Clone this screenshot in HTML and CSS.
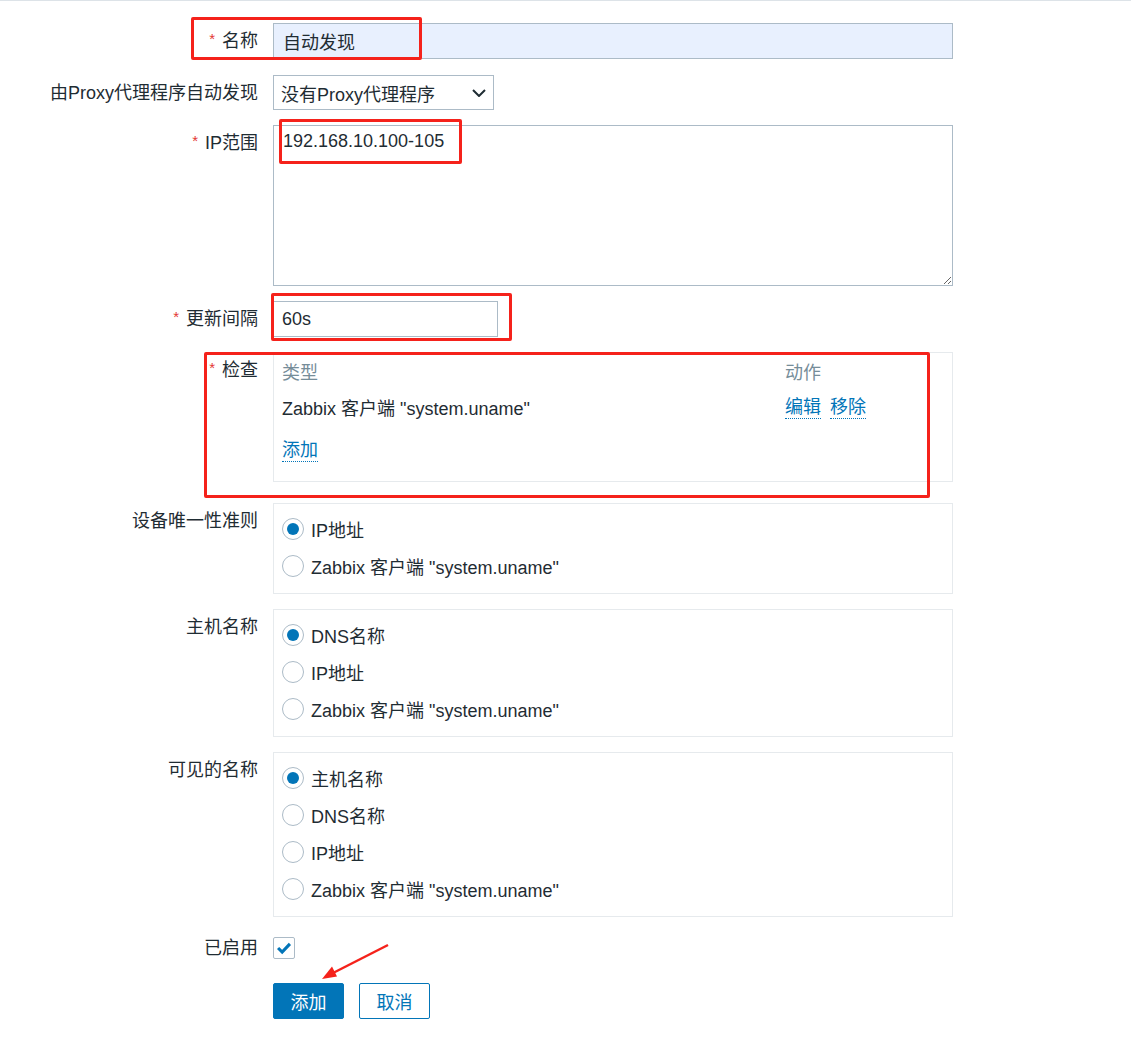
FILE: index.html
```html
<!DOCTYPE html>
<html lang="zh-CN">
<head>
    <meta charset="UTF-8" />
    <meta name="viewport" content="width=device-width, initial-scale=1.0" />
    <title>自动发现</title>
    <link rel="stylesheet" href="styles.css">
</head>
<body>
    <div class="page">
        <form class="form">
            <div class="row row-first">
                <label class="label required">名称</label>
                <input class="input input-name" type="text" value="自动发现" />
            </div>

            <div class="row row-select">
                <label class="label">由Proxy代理程序自动发现</label>
                <div class="select">
                    <span>没有Proxy代理程序</span>
                    <svg class="chevron" viewBox="0 0 14 8"><path d="M1 1 L7 7 L13 1" /></svg>
                </div>
            </div>

            <div class="row">
                <label class="label required">IP范围</label>
                <textarea class="input textarea">192.168.10.100-105</textarea>
            </div>

            <div class="row">
                <label class="label required">更新间隔</label>
                <input class="input input-delay" type="text" value="60s" />
            </div>

            <div class="row row-checks">
                <label class="label required">检查</label>
                <div class="checks">
                    <div class="checks-line checks-head">
                        <span class="col-type">类型</span>
                        <span>动作</span>
                    </div>
                    <div class="checks-line">
                        <span class="col-type">Zabbix 客户端 "system.uname"</span>
                        <span class="actions">
                            <a class="link">编辑</a>
                            <a class="link">移除</a>
                        </span>
                    </div>
                    <div class="checks-line checks-add">
                        <a class="link">添加</a>
                    </div>
                </div>
            </div>

            <div class="row">
                <label class="label">设备唯一性准则</label>
                <div class="radio-box">
                    <div class="radio-item"><span class="radio checked"></span>IP地址</div>
                    <div class="radio-item"><span class="radio"></span>Zabbix 客户端 "system.uname"</div>
                </div>
            </div>

            <div class="row">
                <label class="label">主机名称</label>
                <div class="radio-box">
                    <div class="radio-item"><span class="radio checked"></span>DNS名称</div>
                    <div class="radio-item"><span class="radio"></span>IP地址</div>
                    <div class="radio-item"><span class="radio"></span>Zabbix 客户端 "system.uname"</div>
                </div>
            </div>

            <div class="row">
                <label class="label">可见的名称</label>
                <div class="radio-box">
                    <div class="radio-item"><span class="radio checked"></span>主机名称</div>
                    <div class="radio-item"><span class="radio"></span>DNS名称</div>
                    <div class="radio-item"><span class="radio"></span>IP地址</div>
                    <div class="radio-item"><span class="radio"></span>Zabbix 客户端 "system.uname"</div>
                </div>
            </div>

            <div class="row row-enabled">
                <label class="label">已启用</label>
                <span class="checkbox">
                    <svg viewBox="0 0 22 22"><path d="M4.5 11 L9 15.5 L17.5 6.5" /></svg>
                </span>
            </div>

            <div class="row">
                <span class="label"></span>
                <div class="buttons">
                    <button type="button" class="btn btn-primary">添加</button>
                    <button type="button" class="btn btn-alt">取消</button>
                </div>
            </div>
        </form>

        <!-- annotations drawn over the screenshot -->
        <div class="mark mark-name"></div>
        <div class="mark mark-ip"></div>
        <div class="mark mark-delay"></div>
        <div class="mark mark-checks"></div>
        <svg class="arrow" viewBox="0 0 80 50">
            <line x1="78" y1="10" x2="23" y2="38" />
            <polygon points="12,44 27,41.5 22,31.5" />
        </svg>
    </div>
</body>
</html>
```

FILE: styles.css
```css
body {
    margin: 0;
    font-family: "Liberation Sans", Arial, "Noto Sans CJK SC", sans-serif;
    font-size: 18px;
    color: #1f2c33;
    background: #fff;
}
.page {
    position: relative;
    padding-top: 23px;
    min-height: 1041px;
    box-sizing: border-box;
    box-shadow: inset 0 1px 0 #dde3e8;
}
.row {
    display: flex;
    align-items: flex-start;
    margin-bottom: 15px;
}
.row-first {
    margin-bottom: 16px;
}
.row-select {
    margin-bottom: 14px;
}
.row-checks {
    margin-bottom: 21px;
}
.label {
    flex: none;
    width: 258px;
    height: 36px;
    margin-right: 15px;
    text-align: right;
    line-height: 36px;
    white-space: nowrap;
}
.required::before {
    content: "*";
    color: #e33734;
    font-size: 15px;
    position: relative;
    top: -3px;
    margin-right: 7px;
}
.input {
    box-sizing: border-box;
    height: 36px;
    border: 1px solid #acbbc7;
    padding: 0 9px;
    font: inherit;
    color: inherit;
    background: #fff;
    outline: none;
    margin: 0;
}
.input-name {
    width: 680px;
    background: #e8f0fe;
}
.input-delay {
    width: 225px;
    padding: 0 8px;
}
.textarea {
    width: 680px;
    height: 161px;
    padding: 4px 9px;
    line-height: 22px;
    resize: both;
    display: block;
}
.select {
    box-sizing: border-box;
    width: 221px;
    height: 35px;
    border: 1px solid #acbbc7;
    padding: 0 7px;
    display: flex;
    align-items: center;
    justify-content: space-between;
    background: #fff;
}
.chevron {
    width: 14px;
    height: 8px;
    fill: none;
    stroke: #1f2c33;
    stroke-width: 2;
}
.checks {
    box-sizing: border-box;
    width: 680px;
    border: 1px solid #e6eaed;
    padding: 0 8px 13px;
}
.checks-line {
    display: flex;
    align-items: center;
    height: 36px;
}
.checks-head {
    color: #768d99;
}
.col-type {
    width: 503px;
    flex: none;
}
.checks-add {
    margin-top: 7px;
}
.actions {
    display: flex;
    gap: 9px;
}
.link {
    display: inline-block;
    line-height: 22px;
    color: #0275b8;
    border-bottom: 1px dotted #0275b8;
    cursor: pointer;
}
.radio-box {
    box-sizing: border-box;
    width: 680px;
    border: 1px solid #e6eaed;
    padding: 6px 8px 9px;
}
.radio-item {
    display: flex;
    align-items: center;
    height: 37px;
    gap: 7px;
}
.radio {
    box-sizing: border-box;
    width: 22px;
    height: 22px;
    border: 1px solid #acbbc7;
    border-radius: 50%;
    display: flex;
    align-items: center;
    justify-content: center;
    background: #fff;
}
.radio.checked::after {
    content: "";
    width: 12px;
    height: 12px;
    border-radius: 50%;
    background: #0275b8;
}
.row-enabled {
    align-items: center;
    height: 32px;
    margin-bottom: 19px;
}
.row-enabled .label {
    height: 32px;
    line-height: 32px;
}
.checkbox {
    box-sizing: border-box;
    width: 22px;
    height: 22px;
    border: 1px solid #acbbc7;
    border-radius: 2px;
    display: flex;
}
.checkbox svg {
    width: 20px;
    height: 20px;
    fill: none;
    stroke: #0275b8;
    stroke-width: 3.4;
}
.buttons {
    display: flex;
    gap: 15px;
}
.btn {
    box-sizing: border-box;
    width: 71px;
    height: 36px;
    border-radius: 2px;
    border: 1px solid #0275b8;
    font: inherit;
    cursor: pointer;
    padding: 0;
}
.btn-primary {
    background: #0275b8;
    color: #fff;
}
.btn-alt {
    background: #fff;
    color: #0275b8;
}
.mark {
    position: absolute;
    box-sizing: border-box;
    border: 3px solid #f5221b;
    border-radius: 2px;
}
.mark-name {
    left: 191px;
    top: 17px;
    width: 231px;
    height: 43px;
}
.mark-ip {
    left: 279px;
    top: 119px;
    width: 183px;
    height: 45px;
}
.mark-delay {
    left: 271px;
    top: 293px;
    width: 241px;
    height: 48px;
}
.mark-checks {
    left: 204px;
    top: 352px;
    width: 726px;
    height: 146px;
}
.arrow {
    position: absolute;
    left: 310px;
    top: 935px;
    width: 80px;
    height: 50px;
}
.arrow line {
    stroke: #f5221b;
    stroke-width: 2.5;
}
.arrow polygon {
    fill: #f5221b;
}
```
